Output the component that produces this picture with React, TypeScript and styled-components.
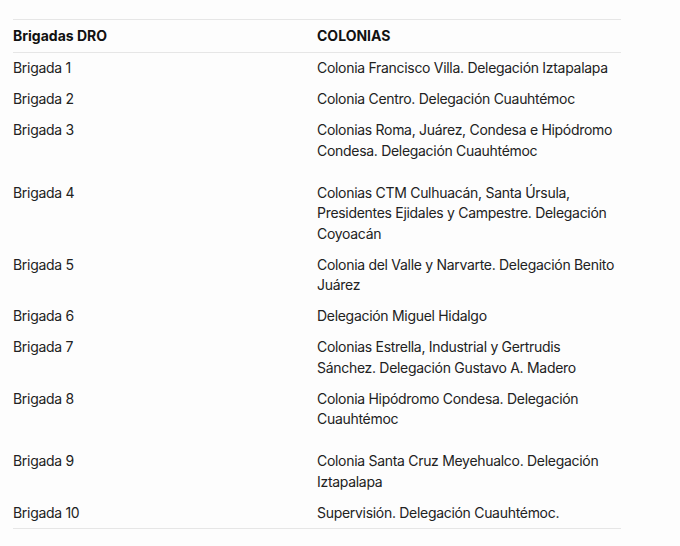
import React from "react";
import styled, { createGlobalStyle } from "styled-components";

const GlobalStyle = createGlobalStyle`
  body {
    margin: 0;
    background: #fdfdfd;
    font-family: Inter, "Noto Sans", sans-serif;
    color: #222;
  }
`;

const rows = [
  { brigada: "Brigada 1", colonia: "Colonia Francisco Villa. Delegación Iztapalapa" },
  { brigada: "Brigada 2", colonia: "Colonia Centro. Delegación Cuauhtémoc" },
  { brigada: "Brigada 3", colonia: "Colonias Roma, Juárez, Condesa e Hipódromo Condesa. Delegación Cuauhtémoc", extra: true },
  { brigada: "Brigada 4", colonia: "Colonias CTM Culhuacán, Santa Úrsula, Presidentes Ejidales y Campestre. Delegación Coyoacán" },
  { brigada: "Brigada 5", colonia: "Colonia del Valle y Narvarte. Delegación Benito Juárez" },
  { brigada: "Brigada 6", colonia: "Delegación Miguel Hidalgo" },
  { brigada: "Brigada 7", colonia: "Colonias Estrella, Industrial y Gertrudis Sánchez. Delegación Gustavo A. Madero" },
  { brigada: "Brigada 8", colonia: "Colonia Hipódromo Condesa. Delegación Cuauhtémoc", extra: true },
  { brigada: "Brigada 9", colonia: "Colonia Santa Cruz Meyehualco. Delegación Iztapalapa" },
  { brigada: "Brigada 10", colonia: "Supervisión. Delegación Cuauhtémoc." },
];

export default function App() {
  return (
    <>
      <GlobalStyle />
      <Wrapper>
        <Table>
          <thead>
            <tr>
              <Th>Brigadas DRO</Th>
              <Th>COLONIAS</Th>
            </tr>
          </thead>
          <tbody>
            {rows.map((r) => (
              <Row key={r.brigada} $last={r.brigada === "Brigada 10"}>
                <Td $extra={r.extra}>{r.brigada}</Td>
                <Td $extra={r.extra}>{r.colonia}</Td>
              </Row>
            ))}
          </tbody>
        </Table>
      </Wrapper>
    </>
  );
}

const Wrapper = styled.div`
  padding: 19px 0 0 13px;
`;

const Table = styled.table`
  width: 608px;
  border-collapse: collapse;
  table-layout: fixed;
  font-size: 14px;
`;

const Th = styled.th`
  width: 50%;
  text-align: left;
  font-weight: 700;
  color: #111;
  line-height: 20px;
  padding: 6px 0;
  border-top: 1px solid #e6e6e6;
  border-bottom: 1px solid #e6e6e6;
`;

const Row = styled.tr<{ $last?: boolean }>`
  border-bottom: ${(p) => (p.$last ? "1px solid #e6e6e6" : "none")};
`;

const Td = styled.td<{ $extra?: boolean }>`
  vertical-align: top;
  line-height: 20.5px;
  letter-spacing: -0.3px;
  padding: 5.3px 0 ${(p) => (p.$extra ? "15.8px" : "5.3px")};
`;
